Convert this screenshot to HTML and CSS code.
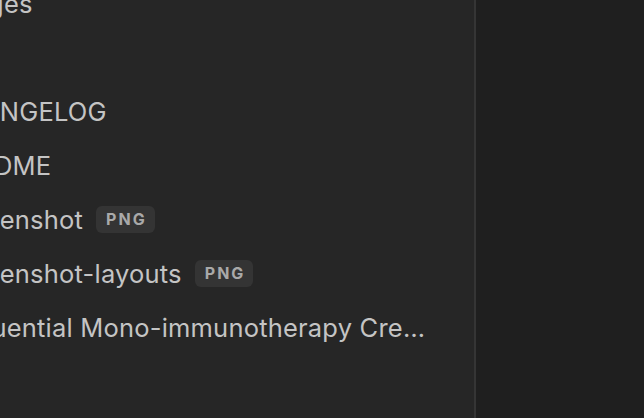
FILE: index.html
```html
<!DOCTYPE html>
<html>
<head>
<meta charset="utf-8">
<link rel="stylesheet" href="styles.css">
</head>
<body>
<div class="app">
  <div class="sidebar">
    <ul class="files">
      <li class="row"><span class="name">Images</span></li>
      <li class="row"></li>
      <li class="row"><span class="name">CHANGELOG</span></li>
      <li class="row"><span class="name">README</span></li>
      <li class="row"><span class="name">Screenshot</span><span class="badge">PNG</span></li>
      <li class="row"><span class="name">Screenshot-layouts</span><span class="badge">PNG</span></li>
      <li class="row"><span class="name">Sequential Mono-immunotherapy Creates Durable Response</span></li>
    </ul>
  </div>
  <div class="divider"></div>
  <div class="main"></div>
</div>
</body>
</html>
```
FILE: styles.css
```css
html, body {
  margin: 0;
  padding: 0;
  height: 100%;
  overflow: hidden;
  background: #1f1f1f;
}
.app {
  display: flex;
  height: 418px;
  width: 644px;
  font-family: "Inter", "Noto Sans", sans-serif;
}
.sidebar {
  width: 474px;
  flex: none;
  background: #262626;
  overflow: hidden;
}
.divider {
  width: 2px;
  flex: none;
  background: #353535;
}
.main {
  flex: 1;
  background: #1f1f1f;
}
.files {
  list-style: none;
  margin: -24px 0 0 -56px;
  padding: 0;
}
.row {
  height: 54px;
  display: flex;
  align-items: center;
  gap: 13px;
  color: #c4c4c4;
  font-size: 25.5px;
  letter-spacing: 0.2px;
  width: 485px;
}
.name {
  white-space: nowrap;
  overflow: hidden;
  text-overflow: ellipsis;
  min-width: 0;
}
.badge {
  flex: none;
  background: #343434;
  color: #a9a9a9;
  font-size: 16px;
  font-weight: 700;
  letter-spacing: 2px;
  padding: 4px 8px 4px 10px;
  border-radius: 6px;
  line-height: 19px;
}
```
